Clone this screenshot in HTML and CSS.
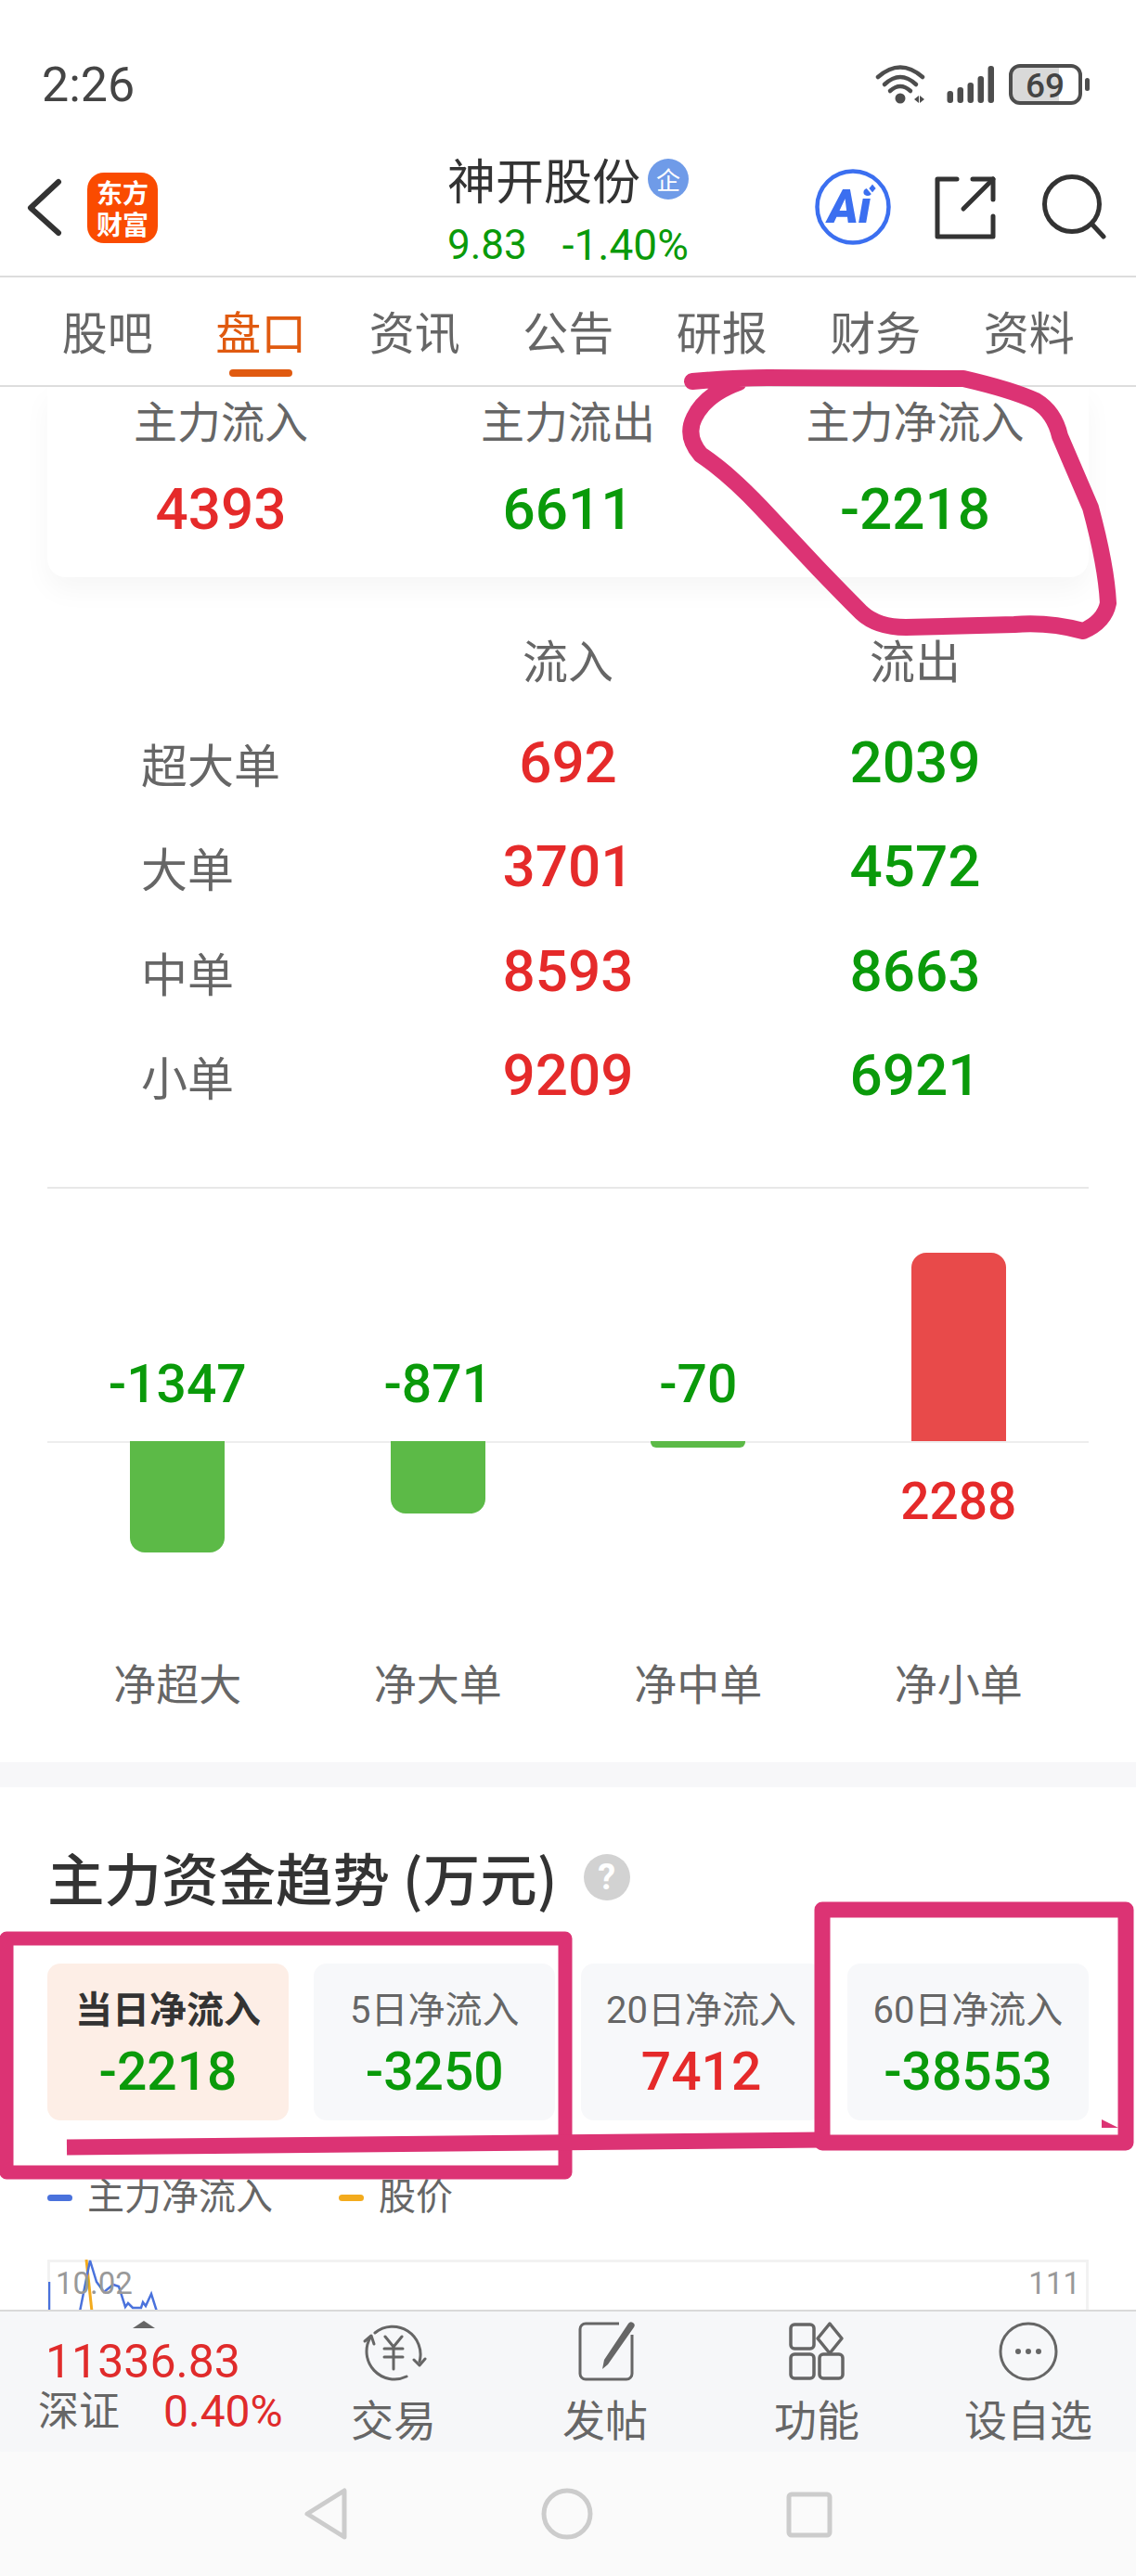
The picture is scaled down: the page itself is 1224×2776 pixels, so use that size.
FILE: index.html
```html
<!DOCTYPE html>
<html lang="zh-CN">
<head>
<meta charset="utf-8">
<title>神开股份</title>
<link rel="stylesheet" href="styles.css">
</head>
<body>
<div class="phone">
  <div class="status">
    <span class="time">2:26</span>
    <svg class="status-icons" viewBox="940 60 240 60" width="240" height="60">
      <g fill="none" stroke="#4d4d4d" stroke-width="4.5" stroke-linecap="round">
        <path d="M946 83Q970 62 994 83"/>
        <path d="M953 91Q970 75 987 91"/>
        <path d="M959 98Q970 88 981 98"/>
      </g>
      <circle cx="970" cy="106" r="5.5" fill="#4d4d4d"/>
      <path d="M985 107l5-4v8zM991 103l5 4-5 4z" fill="#4d4d4d"/>
      <g fill="#4d4d4d">
        <rect x="1020.500" y="98" width="6.500" height="13" rx="3"/>
        <rect x="1031.500" y="94" width="6.500" height="17" rx="3"/>
        <rect x="1042.500" y="89" width="6.500" height="22" rx="3"/>
        <rect x="1053.500" y="82" width="6.500" height="29" rx="3"/>
        <rect x="1064.500" y="71" width="6.500" height="40" rx="3"/>
        <rect x="1169" y="84" width="5" height="14" rx="2.500"/>
      </g>
      <path d="M1098 71H1141V111H1098A9 9 0 0 1 1089 102V80A9 9 0 0 1 1098 71Z" fill="#d9d9d9"/>
      <rect x="1089" y="71" width="75" height="40" rx="10" fill="none" stroke="#4d4d4d" stroke-width="4"/>
      <text x="1126" y="105" class="batt-text" text-anchor="middle">69</text>
    </svg>
  </div>

  <header class="head">
    <svg class="back" viewBox="28 190 40 68" width="40" height="68">
      <path d="M63 196L33 224L63 251" fill="none" stroke="#333" stroke-width="6" stroke-linecap="round" stroke-linejoin="round"/>
    </svg>
    <div class="logo"><span>东方</span><span>财富</span></div>
    <div class="stock">
      <div class="stock-name">神开股份<span class="badge">企</span></div>
      <div class="stock-price"><span>9.83</span><span>-1.40%</span></div>
    </div>
    <svg class="head-icons" viewBox="875 175 330 100" width="330" height="100">
      <circle cx="919" cy="223" r="38.500" fill="#fff" stroke="#3b6ff0" stroke-width="4.500"/>
      <text x="892" y="240" class="ai-text">Ai</text>
      <path d="M935 203l5 -6 5 6 -5 6z" fill="#3b6ff0" stroke="#fff" stroke-width="2"/>
      <g fill="none" stroke="#333" stroke-width="5" stroke-linecap="round" stroke-linejoin="round">
        <path d="M1031 193H1010V255H1070V233"/>
        <path d="M1048 193H1070V215"/>
        <path d="M1070 193L1038 225"/>
        <circle cx="1155" cy="220" r="29.500"/>
        <path d="M1177 242L1189 255"/>
      </g>
    </svg>
  </header>

  <nav class="tabs">
    <span class="tab">股吧</span>
    <span class="tab tab-on">盘口</span>
    <span class="tab">资讯</span>
    <span class="tab">公告</span>
    <span class="tab">研报</span>
    <span class="tab">财务</span>
    <span class="tab">资料</span>
  </nav>

  <main class="scroll">
    <section class="card">
      <div class="card-col"><div class="label">主力流入</div><div class="big red">4393</div></div>
      <div class="card-col"><div class="label">主力流出</div><div class="big green">6611</div></div>
      <div class="card-col"><div class="label">主力净流入</div><div class="big green">-2218</div></div>
    </section>

    <section class="flow">
      <div class="flow-row flow-head"><span></span><span class="label">流入</span><span class="label">流出</span></div>
      <div class="flow-row"><span class="label flow-name">超大单</span><span class="big red">692</span><span class="big green">2039</span></div>
      <div class="flow-row"><span class="label flow-name">大单</span><span class="big red">3701</span><span class="big green">4572</span></div>
      <div class="flow-row"><span class="label flow-name">中单</span><span class="big red">8593</span><span class="big green">8663</span></div>
      <div class="flow-row"><span class="label flow-name">小单</span><span class="big red">9209</span><span class="big green">6921</span></div>
    </section>

    <section class="net">
      <div class="net-col">
        <div class="up"><div class="num green">-1347</div></div>
        <div class="down"><div class="bar bar-green h-120"></div></div>
        <div class="net-name">净超大</div>
      </div>
      <div class="net-col">
        <div class="up"><div class="num green">-871</div></div>
        <div class="down"><div class="bar bar-green h-78"></div></div>
        <div class="net-name">净大单</div>
      </div>
      <div class="net-col">
        <div class="up"><div class="num green">-70</div></div>
        <div class="down"><div class="bar bar-green h-7"></div></div>
        <div class="net-name">净中单</div>
      </div>
      <div class="net-col">
        <div class="up"><div class="bar bar-red"></div></div>
        <div class="down"><div class="num red num-below">2288</div></div>
        <div class="net-name">净小单</div>
      </div>
    </section>

    <div class="band"></div>

    <section class="trend">
      <h2 class="trend-title">主力资金趋势 (万元)<span class="help">?</span></h2>
      <div class="periods">
        <div class="period period-on"><div class="p-label">当日净流入</div><div class="p-val green">-2218</div></div>
        <div class="period"><div class="p-label">5日净流入</div><div class="p-val green">-3250</div></div>
        <div class="period"><div class="p-label">20日净流入</div><div class="p-val red">7412</div></div>
        <div class="period"><div class="p-label">60日净流入</div><div class="p-val green">-38553</div></div>
      </div>
      <div class="legend">
        <span class="leg"><i class="dash dash-blue"></i>主力净流入</span>
        <span class="leg"><i class="dash dash-orange"></i>股价</span>
      </div>
      <div class="chart">
        <svg class="chart-lines" viewBox="52 2436 200 60" width="200" height="60">
          <path d="M93 2436L99 2492" fill="none" stroke="#f3ab1d" stroke-width="3"/>
          <path d="M53 2460V2492M86 2492L97 2437L104 2460L112 2471L122 2463L128 2465L135 2487L138 2483L143 2488L152 2488L154 2482L157 2486L163 2473L169 2492" fill="none" stroke="#4a72dc" stroke-width="2.500"/>
        </svg>
        <span class="axis">10.02</span><span class="axis">111</span>
      </div>
    </section>
  </main>

  <footer class="foot">
    <div class="index">
      <i class="caret"></i>
      <div class="index-val">11336.83</div>
      <div class="index-line"><span>深证</span><b>0.40%</b></div>
    </div>
    <div class="action">
      <svg viewBox="0 0 76 70" width="76" height="70">
        <g fill="none" stroke="#666" stroke-width="3" stroke-linecap="round" stroke-linejoin="round">
          <path d="M13 20A30 30 0 0 0 52 62"/>
          <path d="M7 24L14 18L17 27"/>
          <path d="M18 15A30 30 0 0 1 66 46"/>
          <path d="M60 44L66 50L72 43"/>
          <path d="M29 19L38 30L47 19M28 32H48M28 41H48M38 30V54"/>
        </g>
      </svg>
      <span>交易</span>
    </div>
    <div class="action">
      <svg viewBox="0 0 76 70" width="76" height="70">
        <path d="M53 5H17A6 6 0 0 0 11 11V59A6 6 0 0 0 17 65H61A6 6 0 0 0 67 59V17" fill="none" stroke="#666" stroke-width="3"/>
        <path d="M63 5A3.500 3.500 0 0 1 69 9L41 49L35 54L37 44Z" fill="#666"/>
      </svg>
      <span>发帖</span>
    </div>
    <div class="action">
      <svg viewBox="0 0 76 70" width="76" height="70">
        <g fill="none" stroke="#666" stroke-width="3.500" stroke-linejoin="round">
          <rect x="10" y="6" width="25" height="26" rx="4"/>
          <path d="M52 5L65 21L52 37L39 21Z"/>
          <rect x="10" y="38" width="25" height="26" rx="4"/>
          <rect x="41" y="38" width="25" height="26" rx="4"/>
        </g>
      </svg>
      <span>功能</span>
    </div>
    <div class="action">
      <svg viewBox="0 0 76 70" width="76" height="70">
        <circle cx="38" cy="35" r="30" fill="none" stroke="#666" stroke-width="3"/>
        <circle cx="27" cy="35" r="3" fill="#666"/><circle cx="38" cy="35" r="3" fill="#666"/><circle cx="49" cy="35" r="3" fill="#666"/>
      </svg>
      <span>设自选</span>
    </div>
  </footer>

  <div class="sysnav">
    <svg viewBox="320 2672 590 74" width="590" height="74">
      <g fill="none" stroke="#ccc" stroke-width="5" stroke-linejoin="round">
        <path d="M371 2684V2734L331 2709Z"/>
        <circle cx="611" cy="2709" r="25"/>
        <rect x="850" y="2688" width="44" height="44" rx="3"/>
      </g>
    </svg>
  </div>

  <svg class="ink" viewBox="0 0 1224 2776" width="1224" height="2776">
    <g fill="none" stroke="#dc3374" stroke-linejoin="round">
      <path stroke-width="18" stroke-linecap="round" d="M746 411Q790 407 827 407L1038 408Q1090 420 1116 432Q1136 444 1142 470L1175 547Q1192 610 1194 650Q1190 670 1167 680Q1130 670 1093 673L976 676Q945 676 928 660Q908 640 882 613L820 547Q785 510 755 490Q738 470 748 450Q760 425 796 412"/>
      <path stroke-width="15" d="M7 2089H609V2341H7Z"/>
      <path stroke-width="17" d="M72 2314L886 2306"/>
      <path stroke-width="17" d="M886 2058H1213V2309H886Z"/>
    </g>
    <path d="M1187 2284L1205 2293H1187Z" fill="#dc3374"/>
  </svg>
</div>
</body>
</html>
```
FILE: styles.css
```css
* { box-sizing: border-box; }
html, body { margin: 0; padding: 0; background: #fff; }
body { font-family: Roboto, "Noto Sans CJK SC", sans-serif; color: #666; }
.phone { position: relative; width: 1224px; height: 2776px; overflow: hidden; display: flex; flex-direction: column; background: #fff; }
.status { height: 165px; flex: none; padding: 60px 44px 0 45px; display: flex; justify-content: space-between; align-items: flex-start; }
.time { font-size: 52px; line-height: 64px; color: #444; }
.batt-text { font: 500 37px Roboto, sans-serif; fill: #444; }
.ai-text { font: italic 900 50px Roboto, sans-serif; fill: #3b6ff0; }
.head { height: 134px; flex: none; display: flex; align-items: flex-start; border-bottom: 2px solid #ddd; padding: 0 19px 0 28px; position: relative; }
.back { margin-top: 25px; flex: none; }
.logo { margin: 21px 0 0 26px; width: 76px; height: 76px; border-radius: 18px; background: #fa4b00; color: #fff; flex: none; display: flex; flex-direction: column; align-items: center; justify-content: center; font-size: 28px; line-height: 34px; font-weight: 700; font-family: "Noto Sans CJK SC", sans-serif; }
.stock { margin-left: 312px; width: 300px; flex: none; }
.stock-name { font-size: 52px; line-height: 62px; color: #333; margin-top: -3px; font-family: "Noto Sans CJK SC", sans-serif; display: flex; align-items: center; white-space: nowrap; }
.badge { width: 44px; height: 44px; border-radius: 50%; background: #6f9be8; color: #fff; font-size: 26px; line-height: 44px; text-align: center; margin-left: 8px; }
.stock-price { font-size: 44px; line-height: 52px; color: #0a9a0a; display: flex; gap: 38px; margin-top: 14px; white-space: nowrap; }
.stock-price span + span { font-size: 46px; }
.head-icons { flex: none; margin: 10px 0 0 auto; }
.tabs { height: 118px; flex: none; position: relative; border-bottom: 2px solid #ddd; display: grid; grid-template-columns: repeat(7, 165.500px); padding-left: 33px; }
.tab { font-size: 49px; line-height: 60px; padding-top: 27px; text-align: center; font-family: "Noto Sans CJK SC", sans-serif; color: #666; position: relative; }
.tab-on { color: #e05a10; }
.tab-on::after { content: ""; position: absolute; left: 50%; margin-left: -34px; width: 68px; height: 8px; border-radius: 4px; background: #e05a10; top: 99px; }
.scroll { flex: 1; min-height: 0; overflow: hidden; }
.card { margin: 0 51px; height: 205px; background: #fff; border-radius: 0 0 20px 20px; box-shadow: 0 14px 30px rgba(0, 0, 0, .04); display: grid; grid-template-columns: repeat(3, 1fr); }
.card-col { text-align: center; padding-top: 5px; }
.label { font-size: 47px; line-height: 60px; color: #666; font-family: "Noto Sans CJK SC", sans-serif; text-align: center; }
.big { font-size: 62px; line-height: 64px; text-align: center; font-weight: 500; }
.card-col .big { margin-top: 35px; }
.red { color: #e52a2a; }
.green { color: #0a9a0a; }
.flow { margin: 0 51px; padding-top: 58px; height: 659px; border-bottom: 2px solid #e8e8e8; }
.flow-row { display: grid; grid-template-columns: repeat(3, 374px); height: 112.300px; align-items: center; }
.flow-head { height: 60px; margin-bottom: 26px; }
.flow-head .label { font-size: 49px; }
.flow-name { text-align: left; padding-left: 101px; font-size: 50px; }
.net { margin: 0 51px; display: grid; grid-template-columns: repeat(4, 280.500px); height: 618px; }
.net-col { display: flex; flex-direction: column; align-items: center; }
.up { height: 272px; width: 100%; display: flex; flex-direction: column; justify-content: flex-end; align-items: center; }
.down { height: 229px; width: 100%; border-top: 2px solid #eee; display: flex; flex-direction: column; align-items: center; }
.num { font-size: 57px; line-height: 60px; font-weight: 500; margin-bottom: 31px; white-space: nowrap; }
.num-below { font-size: 55px; margin: 33px 0 0; }
.bar { width: 102px; flex: none; }
.bar-green { background: #5cba47; border-radius: 0 0 16px 16px; margin-top: -2px; }
.bar-red { background: #e84a4a; border-radius: 16px 16px 0 0; height: 203px; }
.h-120 { height: 120px; }
.h-78 { height: 78px; }
.h-7 { height: 7px; border-radius: 0 0 6px 6px; }
.net-name { font-size: 46px; line-height: 60px; font-family: "Noto Sans CJK SC", sans-serif; color: #666; }
.band { height: 27px; background: #f7f7f9; }
.trend { padding: 0 51px; }
.trend-title { margin: 0; padding-top: 62px; font-size: 61.500px; line-height: 70px; font-weight: 500; color: #333; display: flex; align-items: center; font-family: "Noto Sans CJK SC", sans-serif; white-space: nowrap; }
.help { width: 50px; height: 50px; border-radius: 50%; background: #d2d2d2; color: #fff; font: 700 38px/50px Roboto, sans-serif; text-align: center; margin-left: 28px; }
.periods { display: grid; grid-template-columns: repeat(4, 260px); gap: 27.300px; margin-top: 58px; }
.period { height: 169px; background: #f7f8fa; border-radius: 14px; text-align: center; padding-top: 26px; }
.period-on { background: #fdeee6; }
.p-label { font-size: 40px; line-height: 50px; color: #666; white-space: nowrap; }
.period-on .p-label { color: #333; font-weight: 700; }
.p-val { font-size: 57px; line-height: 62px; font-weight: 500; margin-top: 10px; }
.legend { display: flex; margin-top: 58px; height: 50px; font-size: 40px; line-height: 50px; color: #666; }
.leg { display: flex; align-items: center; width: 314px; }
.leg + .leg { width: auto; }
.dash { width: 27px; height: 7px; border-radius: 4px; margin-right: 16px; }
.dash-blue { background: #4a72dc; }
.dash-orange { background: #f3ab1d; }
.chart { margin-top: 42px; height: 80px; border: 3px solid #f2f2f2; border-bottom: 0; display: flex; justify-content: space-between; padding: 0 6px; position: relative; }
.chart-lines { position: absolute; left: -2px; top: -3px; }
.axis { font-size: 33px; line-height: 46px; color: #999; position: relative; }
.foot { height: 153px; flex: none; background: #f6f7f9; border-top: 2px solid #d9d9d9; display: grid; grid-template-columns: 310px repeat(4, 228px); position: relative; }
.index { position: relative; padding: 27px 0 0 41px; }
.caret { position: absolute; left: 143px; top: 10px; width: 0; height: 0; border-left: 12px solid transparent; border-right: 12px solid transparent; border-bottom: 8px solid #666; }
.index-val { font-size: 50px; line-height: 54px; color: #e02b2b; margin-left: 8px; }
.index-line { display: flex; align-items: center; gap: 47px; font-size: 46px; line-height: 54px; }
.index-line span { font-size: 44px; }
.index-line b { font-weight: 400; color: #e02b2b; font-size: 48px; }
.action { display: flex; flex-direction: column; align-items: center; padding-top: 8px; font-size: 46px; line-height: 56px; color: #666; }
.action span { margin-top: 12px; white-space: nowrap; }
.sysnav { height: 134px; flex: none; background: #fafafa; padding: 30px 0 0 320px; }
.ink { position: absolute; left: 0; top: 0; pointer-events: none; }
```
